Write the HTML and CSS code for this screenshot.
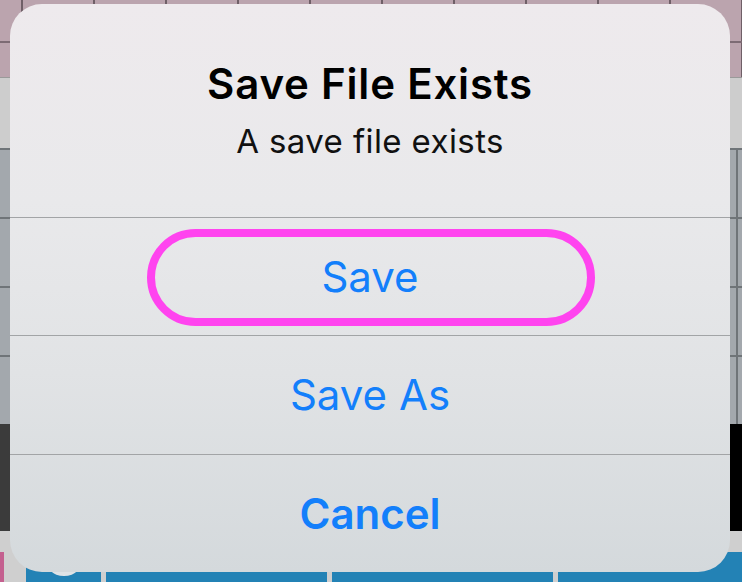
FILE: index.html
```html
<!DOCTYPE html>
<html lang="en">
<head>
  <meta charset="UTF-8">
  <meta name="viewport" content="width=device-width, initial-scale=1.0">
  <title>Save File Exists</title>
  <link rel="stylesheet" href="styles.css">
</head>
<body>
  <div class="app">
    <div class="top-bar"></div>
    <div class="info-bar"></div>
    <div class="chart"></div>
    <div class="panels">
      <div class="panel-left"></div>
      <div class="panel-right"></div>
    </div>
    <div class="spacer-bar"></div>
    <div class="toolbar">
      <div class="tool-pink"></div>
      <div class="tool tool-small"><span class="tool-ring"></span></div>
      <div class="tool tool-wide"></div>
      <div class="tool tool-wide"></div>
      <div class="tool tool-last"></div>
    </div>
  </div>

  <!-- Alert -->
  <div class="alert">
    <div class="alert-header">
      <h1 class="alert-title">Save File Exists</h1>
      <p class="alert-message">A save file exists</p>
    </div>
    <button class="alert-btn highlighted">Save</button>
    <button class="alert-btn">Save As</button>
    <button class="alert-btn cancel">Cancel</button>
  </div>
</body>
</html>
```

FILE: styles.css
```css
body {
  margin: 0;
  padding: 0;
  width: 742px;
  height: 582px;
  overflow: hidden;
  position: relative;
  font-family: Inter, "Noto Sans", sans-serif;
  background-color: #cfcfcf;
}

/* App behind the alert */
.app {
  display: flex;
  flex-direction: column;
  height: 582px;
}

.top-bar {
  height: 77px;
  background-color: #bba4ae;
  background-image:
    linear-gradient(to bottom, transparent 41px, #7d6b74 41px, #7d6b74 43px, transparent 43px),
    repeating-linear-gradient(to right, transparent 0, transparent 21px, #6f5f67 21px, #6f5f67 23px, transparent 23px, transparent 72px);
}

.info-bar {
  height: 70px;
  background-color: #cdcdcd;
  border-top: 1px solid #9a9a9a;
}

.chart {
  height: 276px;
  background-color: #a3a8ad;
  background-image:
    repeating-linear-gradient(to bottom, #6f7478 0, #6f7478 2px, transparent 2px, transparent 69px),
    linear-gradient(to right, transparent 736px, #6f7478 736px, #6f7478 738px, transparent 738px);
}

.panels {
  display: flex;
  height: 107px;
}

.panel-left {
  flex: 1;
  background-color: #3b3b3b;
}

.panel-right {
  flex: 1;
  background-color: #000;
}

.spacer-bar {
  height: 21px;
  background-color: #cfcfcf;
}

.toolbar {
  display: flex;
  height: 30px;
  gap: 5px;
  background-color: #cfcfcf;
}

.tool-pink {
  width: 4px;
  background-color: #c4608f;
  margin-right: 17px;
}

.tool {
  background-color: #2382b5;
  position: relative;
  overflow: hidden;
}

.tool-small { width: 75px; }
.tool-wide { width: 221px; }
.tool-last { flex: 1; }

.tool-ring {
  position: absolute;
  left: 18px;
  top: -16px;
  width: 32px;
  height: 32px;
  border: 4px solid #dfe3e6;
  border-radius: 50%;
}

/* Alert */
.alert {
  position: absolute;
  left: 10px;
  top: 4px;
  width: 720px;
  height: 568px;
  border-radius: 32px;
  overflow: hidden;
  display: flex;
  flex-direction: column;
  background: linear-gradient(to bottom, #eeeaed 0%, #e9e9eb 35%, #e1e3e5 65%, #d4d9dc 100%);
}

.alert-header {
  height: 213px;
  box-sizing: border-box;
  padding-top: 56px;
  text-align: center;
}

.alert-title {
  margin: 0;
  font-size: 42px;
  line-height: 48px;
  font-weight: 600;
  letter-spacing: 0.8px;
  color: #000;
}

.alert-message {
  margin: 13px 0 0;
  font-size: 33px;
  line-height: 40px;
  letter-spacing: 0.4px;
  color: #111;
}

.alert-btn {
  flex: 1;
  position: relative;
  border: none;
  border-top: 1px solid #a2a4a6;
  background: transparent;
  font-family: inherit;
  font-size: 42px;
  color: #137ffb;
  padding: 0;
  cursor: pointer;
}

.alert-btn.cancel {
  font-weight: 600;
}

.alert-btn.highlighted::after {
  content: "";
  position: absolute;
  left: 137px;
  width: 448px;
  top: 11px;
  height: 97px;
  box-sizing: border-box;
  border: 8px solid #ff44ef;
  border-radius: 50px;
}
```
